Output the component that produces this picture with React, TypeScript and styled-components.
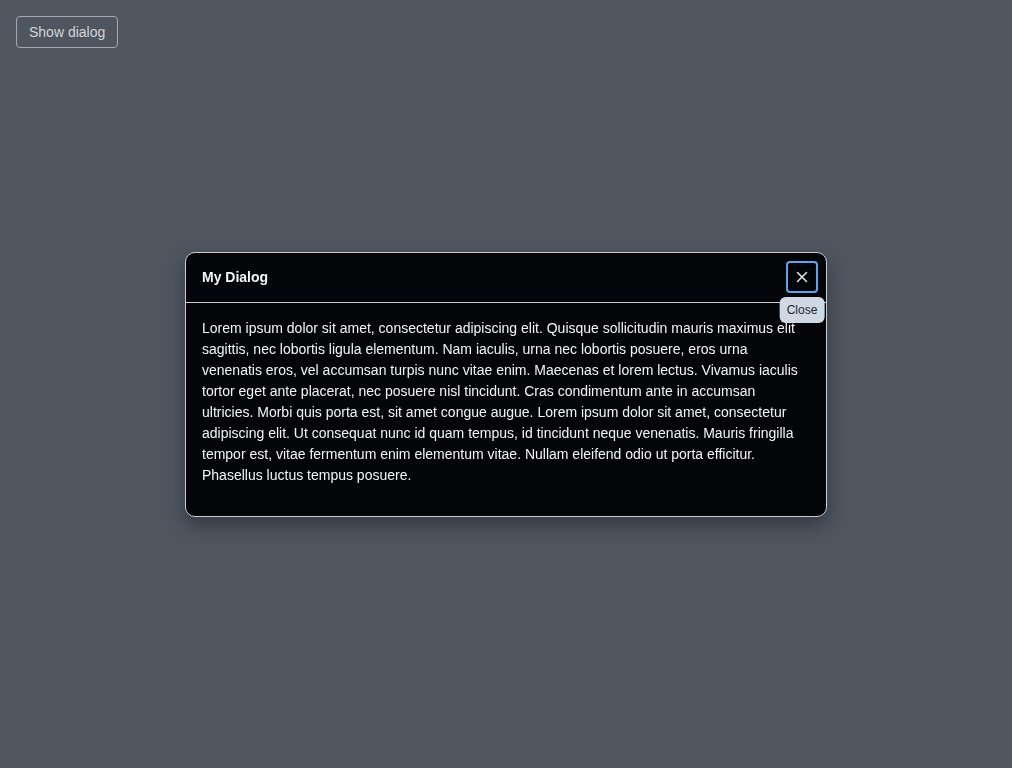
import React from "react";
import styled, { createGlobalStyle } from "styled-components";

const GlobalStyle = createGlobalStyle`
  html, body {
    margin: 0;
    padding: 0;
    height: 100%;
    background: #4f5660;
    font-family: "Liberation Sans", Arial, sans-serif;
  }
`;

const Page = styled.div`
  padding: 16px;
`;

const ShowButton = styled.button`
  height: 32px;
  padding: 0 12px;
  background: transparent;
  border: 1px solid #a3a8b0;
  border-radius: 4px;
  color: #d2d5da;
  font-family: inherit;
  font-size: 14px;
`;

const Overlay = styled.div`
  position: fixed;
  inset: 0;
  display: flex;
  align-items: center;
  justify-content: center;
`;

const DialogBox = styled.div`
  width: 640px;
  background: #030509;
  border: 1px solid #c7ccd4;
  border-radius: 10px;
  box-shadow: 0 8px 18px rgba(0, 0, 0, 0.35);
  color: #f3f4f6;
`;

const Header = styled.div`
  display: flex;
  align-items: center;
  justify-content: space-between;
  height: 49px;
  padding: 0 8px 0 16px;
  border-bottom: 1px solid #c7ccd4;
`;

const Title = styled.h2`
  margin: 0;
  font-size: 14px;
  font-weight: 700;
`;

const CloseWrap = styled.div`
  position: relative;
`;

const CloseButton = styled.button`
  display: flex;
  align-items: center;
  justify-content: center;
  width: 32px;
  height: 32px;
  padding: 0;
  background: transparent;
  border: 2px solid #5ea3f0;
  border-radius: 4px;
  color: #e5e7eb;
`;

const Tooltip = styled.div`
  position: absolute;
  top: 36px;
  left: 50%;
  transform: translateX(-50%);
  padding: 0 7px;
  height: 26px;
  line-height: 26px;
  background: #cfd8e3;
  color: #1f2937;
  border-radius: 6px;
  font-size: 12px;
  white-space: nowrap;
`;

const Body = styled.div`
  padding: 15px 16px 17px;
`;

const Text = styled.p`
  margin: 0 0 13px;
  font-size: 14px;
  line-height: 21px;
`;

const lorem =
  "Lorem ipsum dolor sit amet, consectetur adipiscing elit. Quisque sollicitudin mauris maximus elit sagittis, nec lobortis ligula elementum. Nam iaculis, urna nec lobortis posuere, eros urna venenatis eros, vel accumsan turpis nunc vitae enim. Maecenas et lorem lectus. Vivamus iaculis tortor eget ante placerat, nec posuere nisl tincidunt. Cras condimentum ante in accumsan ultricies. Morbi quis porta est, sit amet congue augue. Lorem ipsum dolor sit amet, consectetur adipiscing elit. Ut consequat nunc id quam tempus, id tincidunt neque venenatis. Mauris fringilla tempor est, vitae fermentum enim elementum vitae. Nullam eleifend odio ut porta efficitur. Phasellus luctus tempus posuere.";

const App: React.FC = () => {
  return (
    <>
      <GlobalStyle />
      <Page>
        <ShowButton>Show dialog</ShowButton>
      </Page>
      <Overlay>
        <DialogBox role="dialog">
          <Header>
            <Title>My Dialog</Title>
            <CloseWrap>
              <CloseButton aria-label="Close">
                <svg width="12" height="12" viewBox="0 0 12 12">
                  <path
                    d="M1.5 1.5 L10.5 10.5 M10.5 1.5 L1.5 10.5"
                    stroke="currentColor"
                    strokeWidth="1.5"
                    strokeLinecap="round"
                  />
                </svg>
              </CloseButton>
              <Tooltip>Close</Tooltip>
            </CloseWrap>
          </Header>
          <Body>
            <Text>{lorem}</Text>
          </Body>
        </DialogBox>
      </Overlay>
    </>
  );
};

export default App;
